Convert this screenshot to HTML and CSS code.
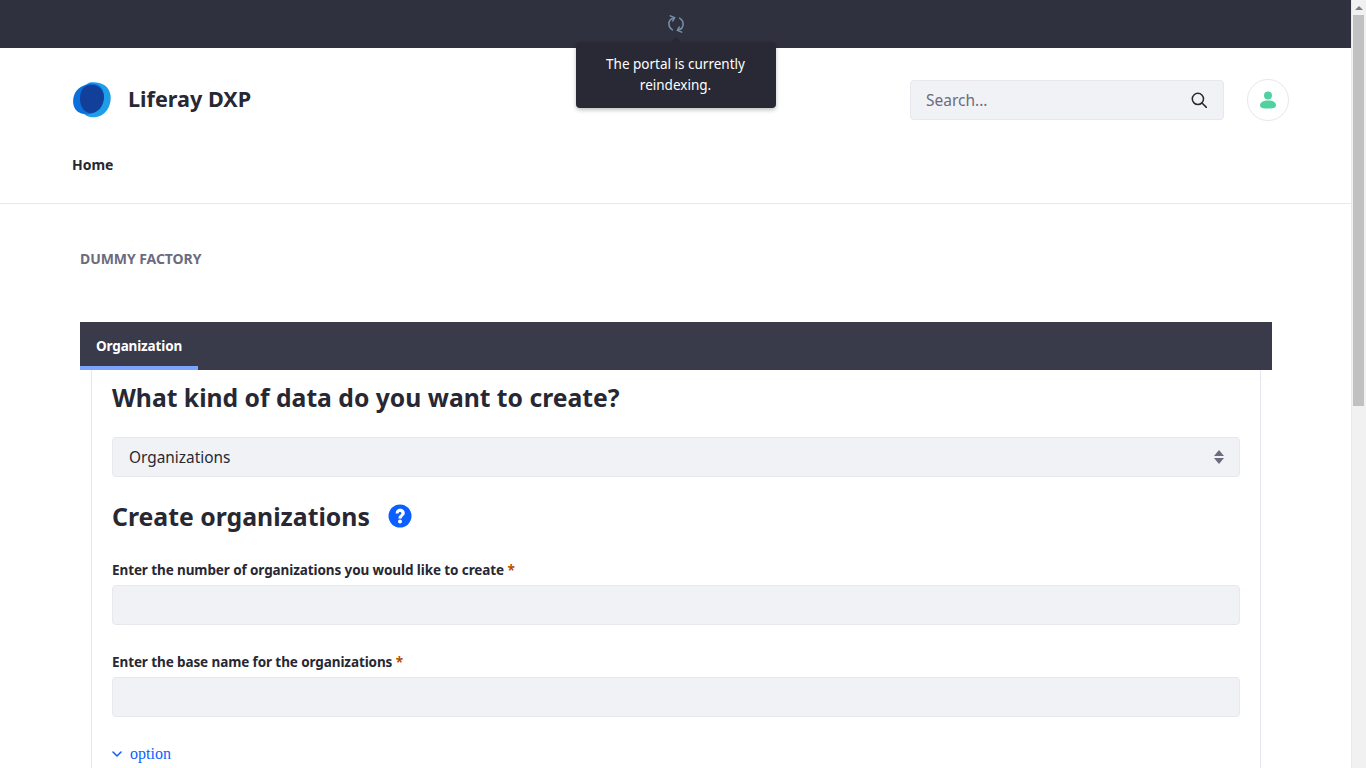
FILE: index.html
```html
<!DOCTYPE html>
<html lang="en">
<head>
<meta charset="utf-8">
<title>Dummy Factory - Liferay DXP</title>
<link rel="stylesheet" href="styles.css">
</head>
<body>
<div class="app">
<div class="page">
<div class="control-bar">
  <svg class="reindex-icon" viewBox="0 0 16 16" width="18" height="18" fill="none" stroke="#7690a5" stroke-width="1.35" stroke-linecap="round" stroke-linejoin="round">
    <path d="M6.6 2.4 C3.6 3 1.6 5.4 1.7 8.2 C1.8 10.4 3 12.2 4.8 13.2"/>
    <path d="M2.9 .8 L6.8 2.3 L5.1 5.2"/>
    <path d="M9.4 13.6 C12.4 13 14.4 10.6 14.3 7.8 C14.2 5.6 13 3.8 11.2 2.8"/>
    <path d="M13.1 15.2 L9.2 13.7 L10.9 10.8"/>
  </svg>
  <div class="tooltip">The portal is currently reindexing.</div>
</div>
<header class="site-header">
  <div class="header-top">
    <a class="brand" href="#">
      <svg class="logo" viewBox="0 0 38 36" width="38" height="36">
        <path fill="#1e9ee8" d="M18 .3 C27 -.6 36 3 37.5 13 C39 23 33 34.5 22 35.2 C12 35.8 6 30 9 17 C10 9 12 1 18 .3Z"/>
        <path fill="#0b6fdc" d="M14 2.3 C23 -.5 31 4 30.7 14 C30.3 24 24 31.6 15 32.2 C7 32.7 .3 28.6 .1 20 C-.1 11 5 5 14 2.3Z"/>
        <path fill="#123f9a" d="M16 3 C24 2 31 7 31 15 C31 24 25 31 18 31 C11 31 7 24 7 17 C7 9 10 4 16 3Z"/>
      </svg>
      <span class="brand-name">Liferay DXP</span>
    </a>
    <div class="header-tools">
      <div class="search">
        <span class="search-placeholder">Search...</span>
        <svg viewBox="0 0 16 16" width="16" height="16" fill="none" stroke="#272833" stroke-width="1.5" stroke-linecap="round"><circle cx="6.9" cy="6.9" r="5.6"/><path d="M11 11 L15.4 15.4"/></svg>
      </div>
      <div class="avatar">
        <svg viewBox="0 0 16 18" width="16" height="18" fill="#4fd1a0"><circle cx="8" cy="4.4" r="4"/><path d="M0 14.5 C0 11 3.5 9.5 8 9.5 C12.5 9.5 16 11 16 14.5 C16 16.8 13 17.6 8 17.6 C3 17.6 0 16.8 0 14.5Z"/></svg>
      </div>
    </div>
  </div>
  <nav class="main-nav"><a href="#">Home</a></nav>
</header>
<main class="content">
  <h1 class="portlet-title">DUMMY FACTORY</h1>
  <div class="tabs"><a class="tab active" href="#">Organization</a></div>
  <section class="card">
    <h2 class="question">What kind of data do you want to create?</h2>
    <div class="select">
      <span>Organizations</span>
      <svg viewBox="0 0 10 14" width="10" height="14" fill="#6b6c7e"><path d="M5 0 L10 6 H0Z"/><path d="M0 8 H10 L5 14Z"/></svg>
    </div>
    <div class="section-head">
      <h2 class="section-title">Create organizations</h2>
      <svg class="help" viewBox="0 0 24 24" width="24" height="24"><circle cx="12" cy="12" r="11.5" fill="#0b5fff"/><path d="M7.6 9.4 C7.6 6.6 9.6 4.8 12.2 4.8 C14.8 4.8 16.8 6.5 16.8 9 C16.8 11.9 13.8 12 13.8 14.4 H10.4 C10.4 11 13.4 10.8 13.4 9.2 C13.4 8.4 12.8 7.9 12 7.9 C11.1 7.9 10.6 8.5 10.5 9.4Z" fill="#fff"/><circle cx="12" cy="17.4" r="2" fill="#fff"/></svg>
    </div>
    <div class="field">
      <label class="field-label">Enter the number of organizations you would like to create <span class="req">*</span></label>
      <div class="input"></div>
    </div>
    <div class="field">
      <label class="field-label">Enter the base name for the organizations <span class="req">*</span></label>
      <div class="input"></div>
    </div>
    <a class="option-toggle" href="#">
      <svg viewBox="0 0 10 6" width="10" height="6" fill="none" stroke="#0b5fff" stroke-width="1.5" stroke-linecap="round" stroke-linejoin="round"><path d="M1 1 L5 5 L9 1"/></svg>
      <span>option</span>
    </a>
  </section>
</main>
</div>
<div class="scrollbar">
  <svg class="scrollbar-arrow" viewBox="0 0 8 4" width="8" height="4" fill="#7d7d7d"><path d="M4 0 L8 4 H0Z"/></svg>
  <div class="scrollbar-thumb"></div>
</div>
</div>
</body>
</html>
```
FILE: styles.css
```css
* { box-sizing: border-box; }
html, body { height: 100%; overflow: hidden; }
body {
  margin: 0;
  background: #fff;
  color: #272833;
  font-family: "Noto Sans", "Open Sans", sans-serif;
}
a { text-decoration: none; color: inherit; }
h1, h2 { margin: 0; }

.app { display: flex; height: 768px; }
.page { flex: 1; min-width: 0; overflow: hidden; }
.scrollbar {
  width: 15px;
  flex: none;
  background: #f1f1f1;
  border-left: 1px solid #e8e8e8;
  padding: 6px 2px 0 1px;
}
.scrollbar-arrow { display: block; margin: 0 auto; }
.scrollbar-thumb { height: 391px; margin-top: 5px; background: #c1c1c1; }

.control-bar {
  position: relative;
  height: 48px;
  background: #30313f;
  display: flex;
  align-items: center;
  justify-content: center;
}
.reindex-icon { display: block; }
.tooltip {
  position: absolute;
  left: 50%;
  top: 42px;
  transform: translateX(-50%);
  width: 200px;
  height: 66px;
  padding: 12px 20px;
  background: #282934;
  border-radius: 4px;
  box-shadow: 0 2px 4px rgba(0,0,0,.25);
  color: #fff;
  font-size: 13.5px;
  line-height: 21px;
  text-align: center;
  z-index: 5;
}
.tooltip::before {
  content: "";
  position: absolute;
  left: 50%;
  top: -5px;
  margin-left: -6px;
  border: 6px solid transparent;
  border-top: 0;
  border-bottom-color: #282934;
}

.site-header {
  height: 156px;
  border-bottom: 1px solid #e7e7ed;
  padding: 31px 62px 0 72px;
}
.header-top {
  display: flex;
  align-items: center;
  justify-content: space-between;
  height: 42px;
}
.brand { display: flex; align-items: center; gap: 17px; }
.logo { display: block; margin-left: 1px; }
.brand-name { font-size: 21.6px; font-weight: 700; line-height: 30px; margin-bottom: 2px; color: #272833; }
.header-tools { display: flex; align-items: center; gap: 23px; }
.search {
  width: 314px;
  height: 40px;
  background: #f1f2f5;
  border: 1px solid #e7e7ed;
  border-radius: 4px;
  padding: 0 16px 0 15px;
  display: flex;
  align-items: center;
  justify-content: space-between;
}
.search-placeholder { font-size: 15.5px; color: #6b6c7e; }
.avatar {
  width: 42px;
  height: 42px;
  border: 1px solid #e7e7ed;
  border-radius: 50%;
  display: flex;
  align-items: center;
  justify-content: center;
}
.main-nav { margin-top: 34px; font-size: 14px; font-weight: 700; line-height: 20px; }

.content { padding: 0 79px 0 80px; }
.portlet-title {
  padding-top: 45px;
  font-size: 14px;
  letter-spacing: -.07px;
  line-height: 20px;
  font-weight: 700;
  color: #6b6c7e;
  text-transform: uppercase;
}
.tabs {
  margin-top: 53px;
  height: 48px;
  background: #393a4a;
  display: flex;
}
.tab {
  width: 118px;
  padding-top: 14px;
  padding-left: 16px;
  border-bottom: 4px solid #7ca3ff;
  color: #fff;
  font-size: 13.5px;
  letter-spacing: -.15px;
  line-height: 20px;
  font-weight: 700;
}
.card {
  margin: 0 11px 0 11px;
  min-height: 1100px;
  border: solid #e7e7ed;
  border-width: 0 1px 1px;
  padding: 0 20px;
}
.question {
  padding-top: 10px;
  font-size: 24.7px;
  line-height: 36px;
  font-weight: 700;
}
.select {
  margin-top: 21px;
  height: 40px;
  background: #f1f2f5;
  border: 1px solid #e7e7ed;
  border-radius: 4px;
  padding: 0 15px 0 16px;
  display: flex;
  align-items: center;
  justify-content: space-between;
  font-size: 15.4px;
}
.section-head {
  margin-top: 21px;
  display: flex;
  align-items: center;
  gap: 18px;
  height: 36px;
}
.section-title { font-size: 24.8px; line-height: 36px; font-weight: 700; }
.help { display: block; }
.field { margin-top: 26px; }
.field + .field { margin-top: 27px; }
.field-label {
  display: block;
  font-size: 13.5px;
  letter-spacing: -.1px;
  line-height: 20px;
  font-weight: 700;
  margin-bottom: 5px;
}
.req { color: #b95000; }
.input {
  height: 40px;
  background: #f1f2f5;
  border: 1px solid #e7e7ed;
  border-radius: 4px;
}
.option-toggle {
  margin-top: 27px;
  display: flex;
  align-items: center;
  gap: 8px;
  color: #0b5fff;
  font-family: "Liberation Serif", serif;
  font-size: 16px;
  line-height: 20px;
}
```
